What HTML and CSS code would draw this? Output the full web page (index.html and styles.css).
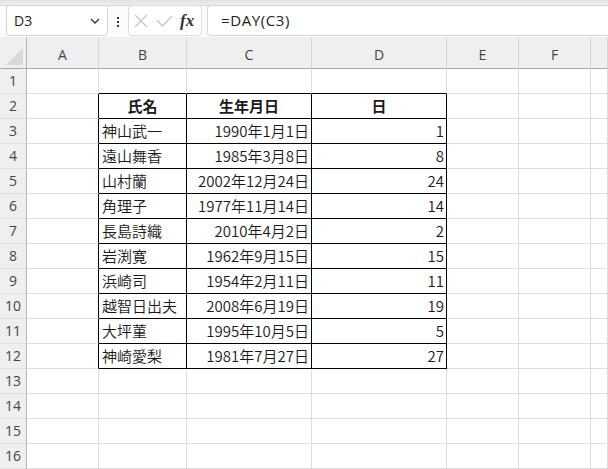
FILE: index.html
```html
<!DOCTYPE html>
<html lang="ja">
<head>
    <meta charset="UTF-8">
    <title>DAY関数</title>
    <link rel="stylesheet" href="styles.css">
</head>
<body>
    <div class="topstrip"></div>

    <div class="fbar">
        <div class="namebox">
            <span>D3</span>
            <svg class="chev" width="10" height="6" viewBox="0 0 10 6"><path d="M1 1 L5 5 L9 1" fill="none" stroke="#333" stroke-width="1.3"/></svg>
        </div>
        <div class="dots"><i></i><i></i><i></i></div>
        <div class="fnbox">
            <svg width="14" height="14" viewBox="0 0 14 14"><path d="M1 1 L13 13 M13 1 L1 13" stroke="#c4c4c4" stroke-width="1.2"/></svg>
            <svg width="17" height="12" viewBox="0 0 17 12"><path d="M1 5 L6.5 11 L16 1" fill="none" stroke="#c4c4c4" stroke-width="1.2"/></svg>
            <span class="fx">fx</span>
        </div>
        <div class="formula">=DAY(C3)</div>
    </div>

    <div class="sheet">
        <div class="row hdr">
            <div class="corner"><svg width="17" height="17" viewBox="0 0 17 17"><path d="M0 17 L17 17 L17 0 Z" fill="#d9d9d9"/></svg></div>
            <div class="ch">A</div><div class="ch">B</div><div class="ch">C</div><div class="ch">D</div><div class="ch">E</div><div class="ch">F</div><div class="ch last"></div>
        </div>

        <div class="row">
            <div class="rh">1</div><div class="c"></div><div class="c top"></div><div class="c top"></div><div class="c top"></div><div class="c"></div><div class="c"></div><div class="c"></div>
        </div>
        <div class="row">
            <div class="rh">2</div><div class="c left"></div>
            <div class="c in th">氏名</div><div class="c in th">生年月日</div><div class="c in th">日</div>
            <div class="c"></div><div class="c"></div><div class="c"></div>
        </div>
        <div class="row">
            <div class="rh">3</div><div class="c left"></div>
            <div class="c in name">神山武一</div><div class="c in num">1990年1月1日</div><div class="c in num">1</div>
            <div class="c"></div><div class="c"></div><div class="c"></div>
        </div>
        <div class="row">
            <div class="rh">4</div><div class="c left"></div>
            <div class="c in name">遠山舞香</div><div class="c in num">1985年3月8日</div><div class="c in num">8</div>
            <div class="c"></div><div class="c"></div><div class="c"></div>
        </div>
        <div class="row">
            <div class="rh">5</div><div class="c left"></div>
            <div class="c in name">山村蘭</div><div class="c in num">2002年12月24日</div><div class="c in num">24</div>
            <div class="c"></div><div class="c"></div><div class="c"></div>
        </div>
        <div class="row">
            <div class="rh">6</div><div class="c left"></div>
            <div class="c in name">角理子</div><div class="c in num">1977年11月14日</div><div class="c in num">14</div>
            <div class="c"></div><div class="c"></div><div class="c"></div>
        </div>
        <div class="row">
            <div class="rh">7</div><div class="c left"></div>
            <div class="c in name">長島詩織</div><div class="c in num">2010年4月2日</div><div class="c in num">2</div>
            <div class="c"></div><div class="c"></div><div class="c"></div>
        </div>
        <div class="row">
            <div class="rh">8</div><div class="c left"></div>
            <div class="c in name">岩渕寛</div><div class="c in num">1962年9月15日</div><div class="c in num">15</div>
            <div class="c"></div><div class="c"></div><div class="c"></div>
        </div>
        <div class="row">
            <div class="rh">9</div><div class="c left"></div>
            <div class="c in name">浜崎司</div><div class="c in num">1954年2月11日</div><div class="c in num">11</div>
            <div class="c"></div><div class="c"></div><div class="c"></div>
        </div>
        <div class="row">
            <div class="rh">10</div><div class="c left"></div>
            <div class="c in name">越智日出夫</div><div class="c in num">2008年6月19日</div><div class="c in num">19</div>
            <div class="c"></div><div class="c"></div><div class="c"></div>
        </div>
        <div class="row">
            <div class="rh">11</div><div class="c left"></div>
            <div class="c in name">大坪菫</div><div class="c in num">1995年10月5日</div><div class="c in num">5</div>
            <div class="c"></div><div class="c"></div><div class="c"></div>
        </div>
        <div class="row">
            <div class="rh">12</div><div class="c left"></div>
            <div class="c in name">神崎愛梨</div><div class="c in num">1981年7月27日</div><div class="c in num">27</div>
            <div class="c"></div><div class="c"></div><div class="c"></div>
        </div>

        <div class="row"><div class="rh">13</div><div class="c"></div><div class="c"></div><div class="c"></div><div class="c"></div><div class="c"></div><div class="c"></div><div class="c"></div></div>
        <div class="row"><div class="rh">14</div><div class="c"></div><div class="c"></div><div class="c"></div><div class="c"></div><div class="c"></div><div class="c"></div><div class="c"></div></div>
        <div class="row"><div class="rh">15</div><div class="c"></div><div class="c"></div><div class="c"></div><div class="c"></div><div class="c"></div><div class="c"></div><div class="c"></div></div>
        <div class="row"><div class="rh">16</div><div class="c"></div><div class="c"></div><div class="c"></div><div class="c"></div><div class="c"></div><div class="c"></div><div class="c"></div></div>
    </div>
</body>
</html>
```

FILE: styles.css
```css
body {
    margin: 0;
    background-color: #fff;
    font-family: "Open Sans", "Noto Sans", sans-serif;
    overflow: hidden;
}
.topstrip {
    height: 5px;
    background: linear-gradient(#e2e2e2, #ededed);
    border-bottom: 1px solid #d6d6d6;
}
.fbar {
    display: flex;
    height: 31px;
    padding-left: 6px;
    background-color: #fbfbfb;
}
.namebox {
    box-sizing: border-box;
    width: 102px;
    height: 31px;
    margin-top: -1px;
    border: 1px solid #d4d4d4;
    border-radius: 4px;
    background-color: #fff;
    display: flex;
    align-items: center;
    justify-content: space-between;
    padding: 0 7px 0 7px;
    font-size: 14px;
    color: #222;
}
.dots {
    width: 20px;
    display: flex;
    flex-direction: column;
    align-items: center;
    justify-content: center;
    gap: 2px;
}
.dots i {
    width: 2px;
    height: 2px;
    background-color: #333;
}
.fnbox {
    box-sizing: border-box;
    width: 74px;
    height: 31px;
    margin-top: -1px;
    border: 1px solid #dcdcdc;
    border-radius: 4px;
    background-color: #fff;
    display: flex;
    align-items: center;
    padding-left: 5px;
    gap: 8px;
}
.fx {
    font-family: "Liberation Serif", serif;
    font-style: italic;
    font-weight: bold;
    font-size: 17px;
    color: #333;
    margin-left: -1px;
}
.formula {
    flex: 1;
    box-sizing: border-box;
    height: 31px;
    margin-top: -1px;
    margin-left: 5px;
    border: 1px solid #d4d4d4;
    border-right: none;
    border-radius: 4px 0 0 4px;
    background-color: #fff;
    padding-left: 13px;
    line-height: 29px;
    font-size: 15px;
    letter-spacing: 0.6px;
    color: #222;
}
.row {
    display: grid;
    grid-template-columns: 27px 72px 88px 125px 135px 72px 72px 1fr;
    height: 25px;
}
.row > div {
    box-sizing: border-box;
    border-right: 1px solid #dedede;
    border-bottom: 1px solid #dedede;
}
.hdr {
    height: 32px;
    background-color: #efefef;
}
.hdr > div {
    border-bottom: 1px solid #a9a9a9;
    border-right: 1px solid #d8d8d8;
}
.corner {
    display: flex;
    align-items: flex-end;
    justify-content: flex-end;
    padding: 0 3px 3px 0;
}
.hdr > .corner {
    border-right: 1px solid #b3b3b3;
}
.ch {
    text-align: center;
    font-size: 14px;
    color: #444;
    line-height: 24px;
    padding-top: 6px;
}
.rh {
    background-color: #efefef;
    text-align: center;
    font-size: 14px;
    color: #444;
    line-height: 24px;
}
.row > .rh {
    border-right: 1px solid #b3b3b3;
    border-bottom: 1px solid #dedede;
}
.c {
    font-family: "Noto Sans CJK JP", sans-serif;
    font-size: 15px;
    font-weight: 350;
    line-height: 24px;
    color: #1a1a1a;
    white-space: nowrap;
    overflow: hidden;
}
.row > .in {
    border-right: 1px solid #000;
    border-bottom: 1px solid #000;
}
.row > .left {
    border-right: 1px solid #000;
}
.row > .top {
    border-bottom: 1px solid #000;
}
.th {
    text-align: center;
    font-weight: bold;
}
.name {
    padding-left: 3px;
}
.num {
    text-align: right;
    padding-right: 2px;
}
```
